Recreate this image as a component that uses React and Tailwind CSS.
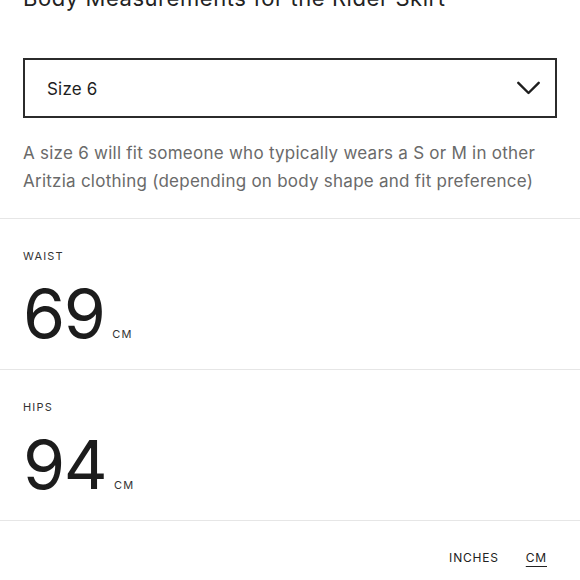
export default function App() {
  const font = { fontFamily: "Inter, 'Noto Sans', sans-serif" };
  const Section = ({ label, value, unit }) => (
    <div className="border-t border-[#e6e6e6] px-[23px] pt-[29px] pb-[22px]">
      <div className="text-[11px] leading-[16px] tracking-[1.2px] text-[#333]">{label}</div>
      <div className="mt-[15px] flex items-baseline">
        <span className="text-[68px] leading-none tracking-[-1.5px] text-[#1c1c1c]">{value}</span>
        <span className="ml-[8px] text-[11px] tracking-[1px] text-[#333]">{unit}</span>
      </div>
    </div>
  );
  return (
    <div className="w-[580px] h-[580px] overflow-hidden bg-white" style={font}>
      <div className="px-[23px]">
        <h2 className="-mt-[16px] text-[22px] leading-[28px] tracking-[0.55px] text-[#222] font-normal">
          Body Measurements for the Rider Skirt
        </h2>
        <div className="mt-[46px] h-[60px] border-2 border-[#2b2b2b] flex items-center justify-between pl-[22px] pr-[15px]">
          <span className="pt-[3px] text-[17px] tracking-[0.2px] text-[#1e1e1e]">Size 6</span>
          <svg width="23" height="14" viewBox="0 0 23 14" fill="none">
            <path d="M1.3 1.8 L11.5 12 L21.7 1.8" stroke="#1e1e1e" strokeWidth="2.4" strokeLinecap="round" strokeLinejoin="round" />
          </svg>
        </div>
        <p className="mt-[21px] text-[17px] leading-[28px] tracking-[0.25px] text-[#6a6a6a]">
          A size 6 will fit someone who typically wears a S or M in other Aritzia clothing (depending on body shape and fit preference)
        </p>
      </div>
      <div className="mt-[23px]">
        <Section label="WAIST" value="69" unit="CM" />
        <Section label="HIPS" value="94" unit="CM" />
        <div className="border-t border-[#e6e6e6] flex justify-end items-center gap-[27px] pr-[33px] pt-[28px] text-[12px] tracking-[0.8px] text-[#222]">
          <span>INCHES</span>
          <span className="underline underline-offset-[4px]">CM</span>
        </div>
      </div>
    </div>
  );
}
